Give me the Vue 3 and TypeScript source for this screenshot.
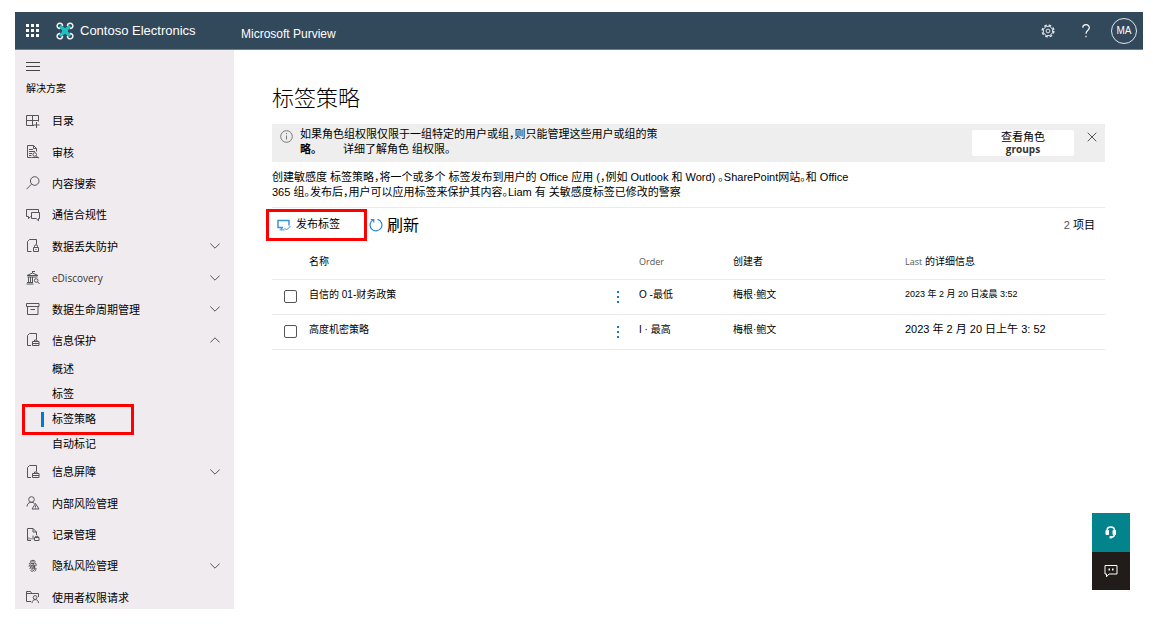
<script setup lang="ts">
import { ref } from 'vue'

interface NavItem {
  label: string
  icon: string
  latin?: boolean
  expand?: 'down' | 'up'
  children?: { label: string; current?: boolean }[]
}

interface Policy {
  name: string
  order: string
  creator: string
  modified: string
  size: 'small' | 'medium'
}

const icons: Record<string, string> = {
  catalog: 'M.5 1.5h12v6M.5 1.5v10h7.5M6.500 1.500v10M.5 6.500h12M10.500 8v6M7.500 11h6',
  audit: 'M5.5 12.5h-4V.5h6l3 3v3M7.5.5v3h3M3 4.5h4M3 6.5h6M3 8.5h3M3 10.5h2.5M10.5 9.5a1.8 1.8 0 1 1-3.6 0a1.8 1.8 0 0 1 3.6 0M10.2 11l2.8 2.2M5.5 12.5h7',
  search: 'M13 5a4.3 4.3 0 1 1-8.6 0a4.3 4.3 0 0 1 8.6 0M5.6 8.1L.5 13.2',
  chat: 'M4.500 8.500L2.500 10.800V8.500H.5v-7h12v3M5.500 4.500h8v6h-1v2.300l-2.300-2.300H5.500z',
  lock: 'M5.5 12.5h-4V2.500l2-2h7v5M7.500 8.500h5v4h-5zM8.500 8.500V7.300a1.500 1.500 0 0 1 3 0v1.200M10 10v1',
  court: 'M1 4.5L6.5 2l5.500 2.500zM6.500 2V0M6.500.5h2.500M1.500 6h10M2.500 6v5M4.500 6v5M6.500 6v5M1 11.500h6M.5 13h7M12 9.500a1.800 1.800 0 1 1-3.600 0a1.800 1.800 0 0 1 3.600 0M11.700 11l1.800 2',
  archive: 'M.5 1.5h12.5v3H.5zM1.5 4.5v8h10.5v-8M4.5 7.5h4.5',
  protect: 'M5 12.5H1.5V2.500l2-2h7v6M6.500 8.500h6.500v4H6.500zM8.500 8.500v-1.500h2.500v1.500M6.500 10.500h6.500M9.700 10v1.200',
  person: 'M8.3 3.5a2.8 2.8 0 1 1-5.6 0a2.8 2.8 0 0 1 5.6 0M1 10.5c0-5 6.5-5 7.5-2.8M9.5 7.5L13 13H6zM9.5 9.5v1.5M9.5 11.5v1',
  records: 'M5 12.5H1.5V.5h5.500l3.500 3.500v3M7 .5v3.500h3.500M3 11.500v-2M5 11.500v-1.500M7 11.500v-4M8.500 9.500h4.500v3H8.500zM9.500 9.500V8.300h2.500v1.200',
  finger: 'M4 2.500c2-1.600 4-1.600 5.500 0M3 5c1.500-3 6-3 7 0v2M3 7.500c1-4.500 5.500-3 5.500-.5v2M3.500 9.500c2-1 1-3.500 3-3.500c1.500 0 1 5-2 5.500M5.500 12.500c2.500-.5 3-2 3-3.500M8.500 12.500c1-.5 1.500-2 1.500-3.500M5 4.500h3.500M3.500 7h6M4 9h5.500',
  folder: 'M5 11.5H.5v-10h4l1.500 2h6.500V7M.5 3.500h5.500M11 7.500a1.900 1.900 0 1 1-3.800 0a1.900 1.900 0 0 1 3.800 0M6 13c0-4.500 6.500-4.500 6.500 0',
}

const nav: NavItem[] = [
  { label: '目录', icon: 'catalog' },
  { label: '审核', icon: 'audit' },
  { label: '内容搜索', icon: 'search' },
  { label: '通信合规性', icon: 'chat' },
  { label: '数据丢失防护', icon: 'lock', expand: 'down' },
  { label: 'eDiscovery', icon: 'court', latin: true, expand: 'down' },
  { label: '数据生命周期管理', icon: 'archive', expand: 'down' },
  {
    label: '信息保护',
    icon: 'protect',
    expand: 'up',
    children: [{ label: '概述' }, { label: '标签' }, { label: '标签策略', current: true }, { label: '自动标记' }],
  },
  { label: '信息屏障', icon: 'protect', expand: 'down' },
  { label: '内部风险管理', icon: 'person' },
  { label: '记录管理', icon: 'records' },
  { label: '隐私风险管理', icon: 'finger', expand: 'down' },
  { label: '使用者权限请求', icon: 'folder' },
]

const policies: Policy[] = [
  { name: '自信的 01-财务政策', order: 'O -最低', creator: '梅根·鲍文', modified: '2023 年 2 月 20 日凌晨 3:52', size: 'small' },
  { name: '高度机密策略', order: 'I · 最高', creator: '梅根·鲍文', modified: '2023 年 2 月 20 日上午 3: 52', size: 'medium' },
]

const selected = ref<string[]>([])
const bannerOpen = ref(true)
</script>

<template>
  <div class="shell">
    <header class="topbar">
      <button class="plain waffle" aria-label="应用启动器">
        <svg width="13" height="13" viewBox="0 0 13 13" fill="#fff">
          <template v-for="y in 3" :key="y">
            <rect v-for="x in 3" :key="x" :x="(x - 1) * 5" :y="(y - 1) * 5" width="3" height="3" />
          </template>
        </svg>
      </button>
      <a class="brand" href="#">
        <svg width="18" height="18" viewBox="0 0 18 18" fill="none">
          <path d="M4 4L14 14M14 4L4 14" stroke="#1fc0c4" stroke-width="3" />
          <path d="M6 5.5L9 7l3-1.500L11 9l1 3.500L9 11l-3 1.500L7 9z" fill="#1fc0c4" stroke="#1fc0c4" stroke-width="1.5" />
          <path
            d="M4.200 6.500A2.700 2.700 0 1 1 6.500 4.200M11.500 4.200A2.700 2.700 0 1 1 13.800 6.500M13.800 11.500A2.700 2.700 0 1 1 11.500 13.800M6.500 13.800A2.700 2.700 0 1 1 4.200 11.500"
            stroke="#f1f6f8"
            stroke-width="1.5"
          />
        </svg>
        <span>Contoso Electronics</span>
      </a>
      <span class="product">Microsoft Purview</span>
      <div class="tools">
        <button class="plain" aria-label="设置">
          <svg width="14" height="14" viewBox="0 0 14 14" fill="none" stroke="#dfe6eb">
            <circle cx="7" cy="7" r="5.8" stroke-width="1.5" stroke-dasharray="2.6 1.955" />
            <circle cx="7" cy="7" r="4.7" />
            <circle cx="7" cy="7" r="1.9" />
          </svg>
        </button>
        <button class="plain" aria-label="帮助">
          <svg width="10" height="14" viewBox="0 0 10 14" fill="none" stroke="#fff" stroke-width="1.2">
            <path d="M1.8 3.8C1.8-.3 8.3-.3 8.3 3.7C8.3 6.2 5 6.5 5 9.8M5 11.8v1.5" />
          </svg>
        </button>
        <button class="plain avatar">MA</button>
      </div>
    </header>

    <div class="body">
      <aside class="side">
        <button class="plain burger" aria-label="折叠导航">
          <svg width="14" height="9" viewBox="0 0 14 9" stroke="#444"><path d="M0 .5h14M0 4.5h14M0 8.5h14" /></svg>
        </button>
        <h2>解决方案</h2>
        <nav>
          <template v-for="item in nav" :key="item.label">
            <a class="item" href="#" :class="{ latin: item.latin }">
              <svg class="icon" width="14" height="14" viewBox="0 0 14 14" fill="none" stroke="#555"><path :d="icons[item.icon]" /></svg>
              <span>{{ item.label }}</span>
              <svg v-if="item.expand" class="chevron" width="10" height="6" viewBox="0 0 10 6" fill="none" stroke="#555">
                <path :d="item.expand === 'down' ? 'M.3 .5L5 5.2L9.7 .5' : 'M.3 5.5L5 .8L9.7 5.5'" />
              </svg>
            </a>
            <a v-for="child in item.children" :key="child.label" class="sub" :class="{ current: child.current }" href="#">{{ child.label }}</a>
          </template>
        </nav>
      </aside>

      <main>
        <h1>标签策略</h1>
        <section v-if="bannerOpen" class="banner">
          <svg class="info" width="13" height="13" viewBox="0 0 13 13" fill="none" stroke="#777">
            <circle cx="6.5" cy="6.5" r="5.8" /><path d="M6.5 5.5v4M6.5 3v1.2" />
          </svg>
          <div class="message">
            <p>如果角色组权限仅限于一组特定的用户或组，则只能管理这些用户或组的策</p>
            <p><b>略。</b><a href="#">详细了解角色 组权限。</a></p>
          </div>
          <button class="roles">查看角色<b>groups</b></button>
          <button class="plain close" aria-label="关闭" @click="bannerOpen = false">
            <svg width="10" height="10" viewBox="0 0 10 10" stroke="#555"><path d="M.7 .7l8.6 8.6M9.3 .7L.7 9.3" /></svg>
          </button>
        </section>
        <p class="intro">
          创建敏感度 标签策略，将一个或多个 标签发布到用户的 Office 应用 (，例如 Outlook 和 Word) 。SharePoint网站。和 Office<br />
          365 组。发布后，用户可以应用标签来保护其内容。Liam 有 关敏感度标签已修改的警察
        </p>

        <div class="toolbar">
          <button class="publish">
            <svg width="14" height="12" viewBox="0 0 14 12" fill="none" stroke="#3a93d8">
              <path d="M6 8.5H1v-7h11v5M4.500 9v1.500" stroke-width="1.5" />
              <path d="M2.500 10.900h5M7.500 9l2 2L13.500 7" />
            </svg>
            <span>发布标签</span>
          </button>
          <button class="plain refresh">
            <svg width="14" height="14" viewBox="0 0 14 14" fill="none" stroke="#2b88d8" stroke-width="1.2">
              <path d="M8.500 1.300a5.900 5.900 0 1 1-4.300.5M1.800 1.500h3v3" />
            </svg>
            <span>刷新</span>
          </button>
          <span class="count">2 <b>项目</b></span>
        </div>

        <table>
          <colgroup>
            <col class="c-check" /><col /><col class="c-more" /><col class="c-order" /><col class="c-creator" /><col class="c-date" />
          </colgroup>
          <thead>
            <tr>
              <td></td>
              <th scope="col">名称</th>
              <td></td>
              <th scope="col"><span class="light">Order</span></th>
              <th scope="col">创建者</th>
              <th scope="col"><span class="light">Last</span> 的详细信息</th>
            </tr>
          </thead>
          <tbody>
            <tr v-for="p in policies" :key="p.name">
              <td class="check"><input v-model="selected" type="checkbox" :value="p.name" :aria-label="p.name" /></td>
              <td>{{ p.name }}</td>
              <td class="more">
                <button class="plain" aria-label="更多操作">
                  <svg width="2" height="12" viewBox="0 0 2 12" fill="#1878c8"><path d="M0 0h2v2H0zM0 5h2v2H0zM0 10h2v2H0z" /></svg>
                </button>
              </td>
              <td>{{ p.order }}</td>
              <td>{{ p.creator }}</td>
              <td :class="p.size">{{ p.modified }}</td>
            </tr>
          </tbody>
        </table>
      </main>
    </div>

    <div class="support">
      <button class="plain help" aria-label="支持">
        <svg width="12" height="13" viewBox="0 0 12 13" fill="none" stroke="#fff" stroke-width="1.5">
          <path d="M2 8V4.5C2-.2 9.500-.2 9.500 4.500V8c0 2-1 3.200-3.500 3.200" />
          <path d="M1 4.500h2.500v4H1zM8 4.500h2.500v4H8z" fill="#fff" stroke-width="1" /><path d="M4.500 11.300h2.500" stroke-width="2.200" />
        </svg>
      </button>
      <button class="plain feedback" aria-label="反馈">
        <svg width="14" height="13" viewBox="0 0 14 13" fill="none" stroke="#fff">
          <path d="M1 .5h12v8.500H5L2.500 11.800V9H1z" /><path d="M4.500 4.500h1.500M8 4.500h1.500" stroke-width="2" />
        </svg>
      </button>
    </div>
  </div>
</template>

<style>
body {
  background: #fff;
}
</style>

<style scoped>
.shell {
  box-sizing: border-box;
  display: flex;
  flex-direction: column;
  min-height: 100vh;
  padding: 12px 10px 16px 15px;
  font: 11px/15px 'Liberation Sans', 'Noto Sans CJK SC', sans-serif;
  font-feature-settings: 'halt';
  color: #000;
}
h1, h2, p { margin: 0; font-weight: 400; }
a { color: inherit; text-decoration: none; }
button { font: inherit; color: inherit; cursor: pointer; }
svg { display: block; flex: none; }
.plain { display: flex; align-items: center; padding: 0; border: 0; background: none; }

.topbar {
  box-sizing: border-box;
  display: flex;
  align-items: center;
  height: 38px;
  padding: 0 6px 0 11px;
  border-bottom: 1px solid #6d7e8b;
  background: #32495c;
  color: #fff;
}
.brand { display: flex; align-items: center; gap: 6px; width: 185px; margin-left: 17px; font-size: 13px; }
.product { font-size: 12px; padding-top: 7px; }
.tools { display: flex; align-items: center; gap: 26px; margin-left: auto; }
.avatar {
  box-sizing: border-box;
  justify-content: center;
  width: 26px;
  height: 26px;
  margin-left: -6px;
  border: 1px solid #dfe6eb;
  border-radius: 50%;
  font-size: 10px;
}

.body { display: flex; flex: 1; }
.side {
  display: flex;
  flex-direction: column;
  flex: none;
  width: 219px;
  padding-top: 8px;
  background: #f0ebef;
  overflow: hidden;
}
.burger { height: 16px; margin-left: 11px; }
h2 { padding: 1px 0 0 11px; margin-bottom: 3px; font-size: 10px; line-height: 28px; }
nav { display: flex; flex: 1; flex-direction: column; margin-bottom: -5px; }
.item { display: flex; flex: 1 1 31px; align-items: center; gap: 12px; padding: 0 14px 0 11px; }
.icon, .chevron { margin-bottom: 2px; }
.latin { font-family: 'Open Sans', sans-serif; font-size: 10px; color: #333; }
.chevron { margin-left: auto; }
.sub { position: relative; padding-left: 37px; line-height: 25px; }
.current::before {
  content: '';
  position: absolute;
  top: 5px;
  left: 26px;
  width: 3px;
  height: 15px;
  background: #0078d4;
}
.current::after {
  content: '';
  position: absolute;
  inset: -3px 100px -3px 7px;
  border: 3px solid #f00;
}

main { flex: 1; min-width: 0; padding: 33px 38px 0; }
h1 { font-size: 22px; font-weight: 300; line-height: 32px; }
.banner { display: flex; align-items: flex-start; margin-top: 9px; padding: 3px 8px 5px 8px; background: #eee; }
.info { margin: 3px 7px 0 0; }
.message { flex: 1; }
.message b { display: inline-block; width: 43px; }
.roles {
  width: 102px;
  margin: 3px 13px 0 0;
  padding: 1px 0;
  border: 0;
  border-radius: 2px;
  background: #fff;
  line-height: 12px;
}
.roles b { display: block; font-family: 'Open Sans', sans-serif; font-size: 10px; color: #333; }
.close { padding: 5px 0 0; }
.intro { padding: 8px 0 7px; }

.toolbar { display: flex; align-items: center; height: 34px; border-top: 1px solid #eaeaea; }
.publish {
  display: flex;
  align-items: center;
  gap: 5px;
  width: 101px;
  height: 32px;
  margin-left: -6px;
  padding: 0 0 0 8px;
  border: 3px solid #f00;
  background: none;
}
.publish span { padding-bottom: 2px; }
.refresh { gap: 4px; margin-left: 2px; font-size: 16px; }
.count { margin-left: auto; padding-right: 10px; color: #555; }
.count b { font-weight: 400; color: #000; }

table { width: 100%; table-layout: fixed; border-collapse: collapse; }
td, th { box-sizing: border-box; height: 35px; padding: 0; border-bottom: 1px solid #eaeaea; font-weight: 400; text-align: left; white-space: nowrap; }
thead td, thead th { height: 37px; padding-top: 3px; font-size: 10px; }
.light { font-family: 'Open Sans', sans-serif; font-size: 9px; color: #555; }
.c-check { width: 37px; }
.c-more { width: 42px; }
.c-order { width: 94px; }
.c-creator { width: 172px; }
.c-date { width: 200px; }
tbody td { padding-bottom: 4px; font-size: 10px; }
tbody .check { padding: 0 0 0 12px; }
tbody .more { padding: 0; }
.check input {
  appearance: none;
  display: block;
  width: 13px;
  height: 13px;
  margin: 0;
  border: 1px solid #555;
  border-radius: 2px;
  background: #fff;
}
.check input:checked { background: #0078d4; }
.more button { margin: 0 auto; }
tbody .small { font-size: 9px; }
tbody .medium { font-size: 11px; }

.support { position: fixed; right: 23px; bottom: 35px; }
.support button { justify-content: center; width: 38px; }
.help { height: 39px; background: #03838b; }
.feedback { height: 38px; background: #211c19; }
</style>
